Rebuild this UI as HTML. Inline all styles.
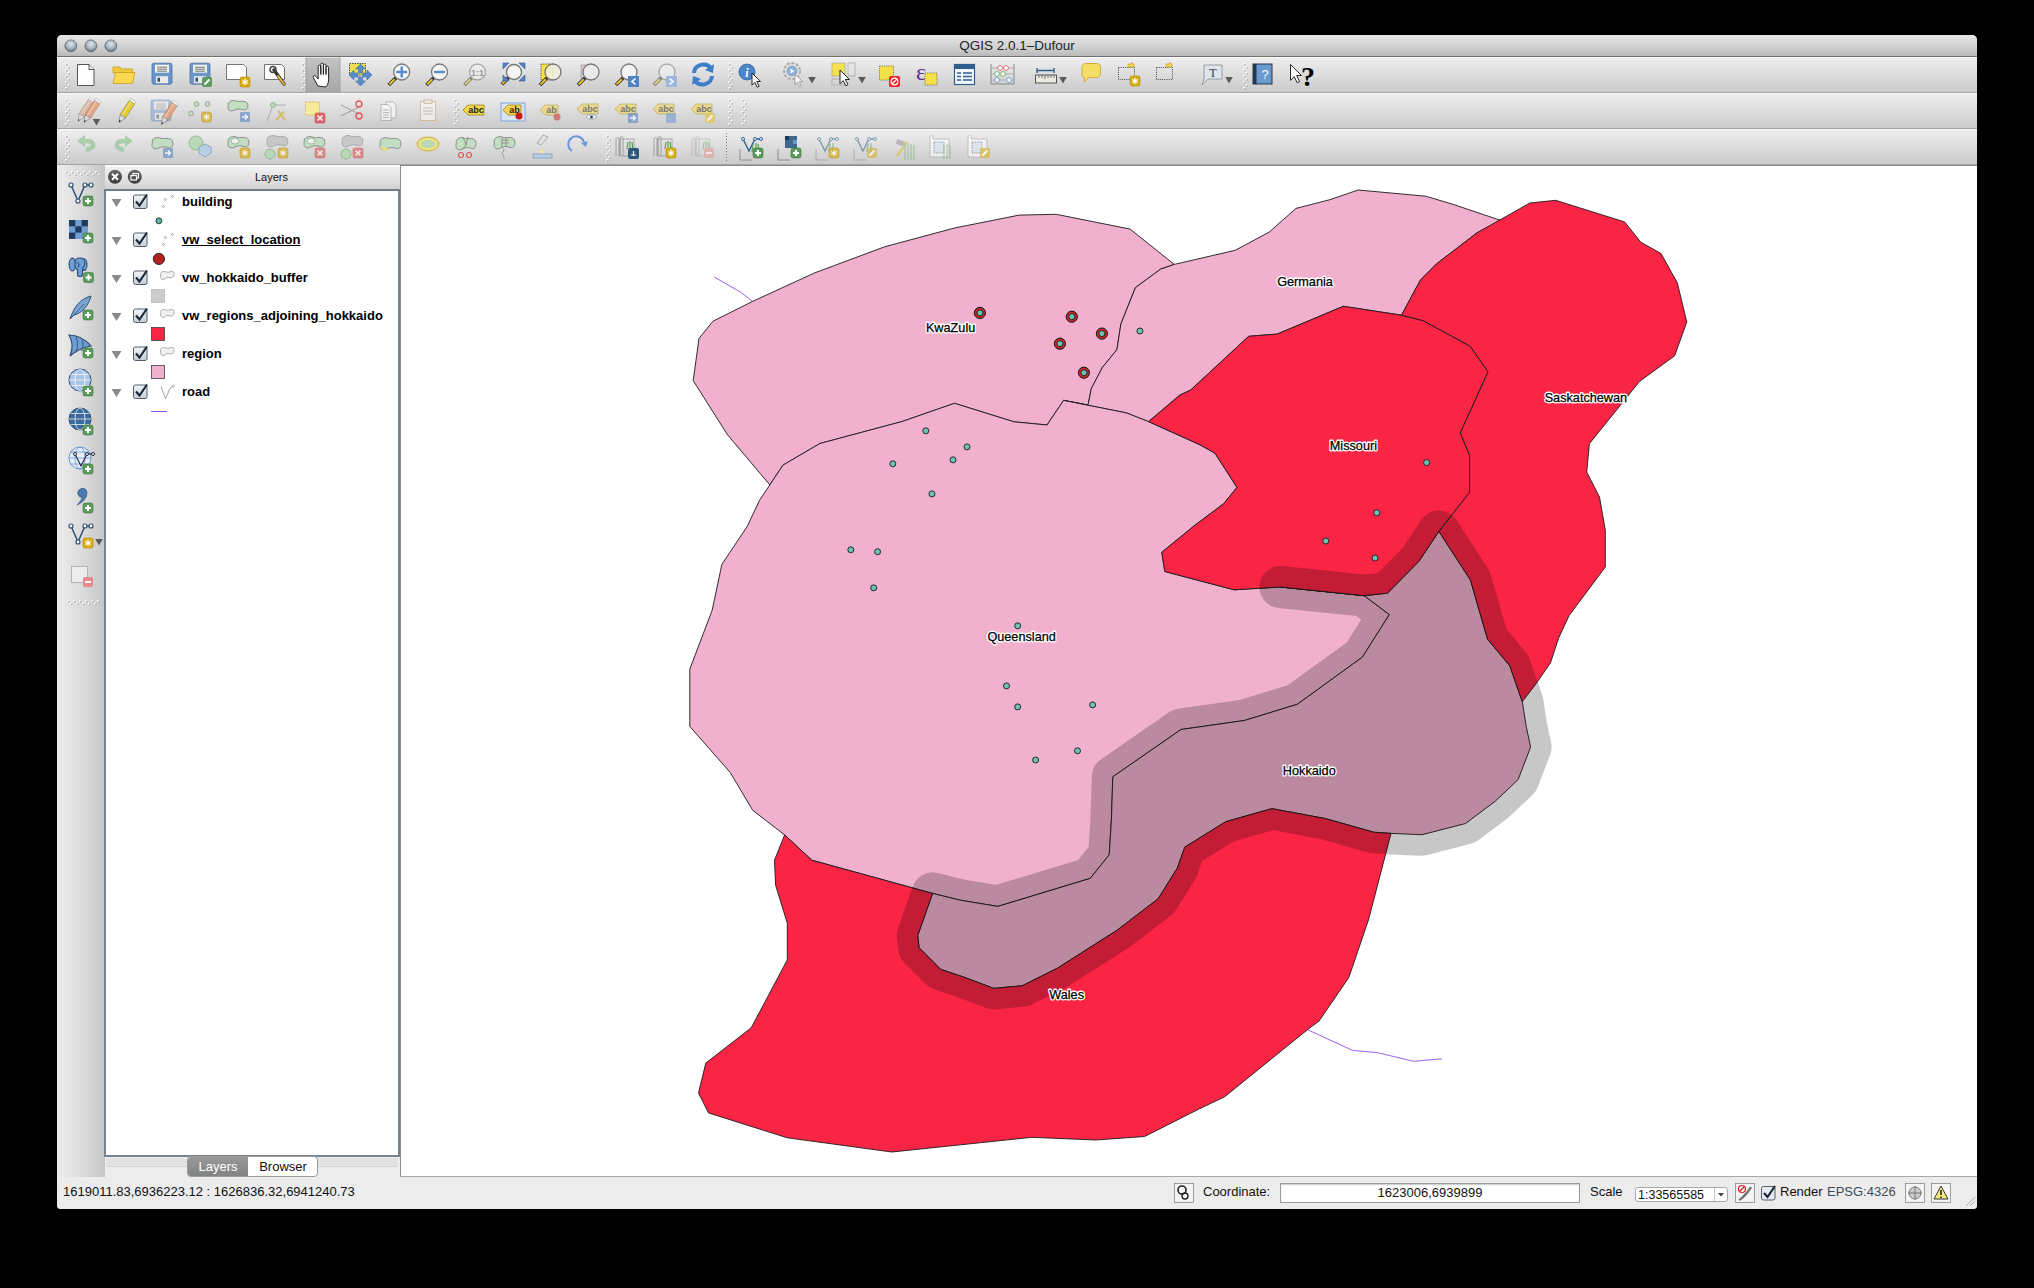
<!DOCTYPE html><html><head><meta charset="utf-8"><title>QGIS</title><style>
*{margin:0;padding:0;box-sizing:border-box}
html,body{width:2034px;height:1288px;background:#000;overflow:hidden;font-family:"Liberation Sans",sans-serif}
.abs{position:absolute}
#win{left:57px;top:35px;width:1920px;height:1174px;background:#ececec;border-radius:5px 5px 4px 4px;overflow:hidden}
#title{left:57px;top:35px;width:1920px;height:22px;background:linear-gradient(#e6e6e6,#d2d2d2 55%,#bababa);border-bottom:1px solid #707070;border-radius:5px 5px 0 0;font-size:13.5px;color:#222;text-align:center;line-height:22px}
.tb{left:57px;width:1920px;height:36px;background:linear-gradient(#eeeeee,#d9d9d9 60%,#cbcbcb);border-top:1px solid #fafafa;border-bottom:1px solid #a4a4a4}
#ltb{left:57px;top:165px;width:48px;height:1012px;background:linear-gradient(90deg,#ededed,#d8d8d8 60%,#c6c6c6)}
#dock{left:105px;top:165px;width:295px;height:1012px;background:#ececec}
#dockhdr{left:105px;top:165px;width:295px;height:25px;background:linear-gradient(#f4f4f4,#dcdcdc 70%,#cdcdcd);border-top:1px solid #fff;font-size:11px;color:#111;padding-left:150px;line-height:22px}
#tree{left:104px;top:189px;width:296px;height:968px;background:#fff;border:2px solid #77838d;border-top:2.5px solid #6f7b86}
#canvas{left:400px;top:165px;width:1577px;height:1012px;background:#fff;border-left:1px solid #8a8a8a;border-top:1px solid #8a8a8a;border-bottom:1px solid #a8a8a8}
#status{left:57px;top:1177px;width:1920px;height:32px;background:#ececec;border-radius:0 0 4px 4px}
.map{position:absolute;left:0;top:0}
.lbl{font-family:"Liberation Sans",sans-serif;font-size:12.7px}
.lyr{position:absolute;font-size:13px;font-weight:bold;color:#000;white-space:nowrap}
.st{position:absolute;font-size:13px;color:#111;white-space:nowrap}
</style></head><body>
<div id="win" class="abs"></div>
<div id="title" class="abs">QGIS 2.0.1–Dufour</div>
<div class="tb abs" style="top:57px"></div>
<div class="tb abs" style="top:93px"></div>
<div class="tb abs" style="top:129px"></div>
<div id="ltb" class="abs"></div>
<div id="dock" class="abs"></div>
<div id="dockhdr" class="abs">Layers</div>
<div id="tree" class="abs"></div>
<div class="abs" style="left:106px;top:1158px;width:292px;height:9px;background:#e3e3e3;border-bottom:1px solid #d4d4d4;border-radius:0 0 4px 4px"></div>
<div id="canvas" class="abs"></div>
<div id="status" class="abs"></div>
<div class="lyr" style="left:182px;top:194px;line-height:15px;">building</div>
<div class="lyr" style="left:182px;top:232px;line-height:15px;text-decoration:underline;">vw_select_location</div>
<div class="lyr" style="left:182px;top:270px;line-height:15px;">vw_hokkaido_buffer</div>
<div class="lyr" style="left:182px;top:308px;line-height:15px;">vw_regions_adjoining_hokkaido</div>
<div class="lyr" style="left:182px;top:346px;line-height:15px;">region</div>
<div class="lyr" style="left:182px;top:384px;line-height:15px;">road</div>
<div class="st" style="left:63px;top:1184px">1619011.83,6936223.12 : 1626836.32,6941240.73</div>
<div class="st" style="left:1203px;top:1184px">Coordinate:</div>
<div class="abs" style="left:1280px;top:1183px;width:300px;height:20px;background:#fff;border:1px solid #9a9a9a;box-shadow:inset 0 1px 1px #ccc;font-size:13px;text-align:center;line-height:18px;color:#111">1623006,6939899</div>
<div class="st" style="left:1590px;top:1184px">Scale</div>
<div class="abs" style="left:1635px;top:1187px;width:93px;height:15px;background:#fff;border:1px solid #a8a8a8;border-radius:3px;font-size:12.5px;line-height:14px;color:#111;padding-left:2px">1:33565585</div>
<div class="st" style="left:1780px;top:1184px">Render</div>
<div class="st" style="left:1827px;top:1184px;color:#3c4a58">EPSG:4326</div>
<div class="abs" style="left:187px;top:1156px;width:131px;height:21px;border:1px solid #9a9a9a;border-radius:4px;background:#fff;overflow:hidden"><div class="abs" style="left:0;top:0;width:60px;height:21px;background:linear-gradient(#9a9a9a,#808080);color:#fff;font-size:13px;line-height:19px;text-align:center">Layers</div><div class="abs" style="left:60px;top:0;width:70px;height:21px;color:#111;font-size:13px;line-height:19px;text-align:center">Browser</div></div>
<svg class="map" width="2034" height="1288" viewBox="0 0 2034 1288">
<defs><clipPath id="mc"><rect x="401" y="166" width="1576" height="1010"/></clipPath></defs>
<g clip-path="url(#mc)">
<polyline points="714.3,277.1 740.7,292.2 752.6,301.4" fill="none" stroke="#a060f0" stroke-width="1"/>
<polyline points="1307.8,1029.8 1352.5,1050.4 1377.4,1052.6 1413.4,1061.3 1442.0,1058.8" fill="none" stroke="#a060f0" stroke-width="1"/>
<polygon points="693.2,380.6 699.0,338.4 713.0,321.2 752.6,301.4 814.6,272.9 884.6,246.8 954.5,228.0 1019.2,215.1 1056.2,214.3 1130.1,229.1 1174.3,264.4 1160.5,269.2 1135.4,287.7 1120.9,323.9 1116.9,349.7 1102.4,367.4 1091.3,388.6 1088.0,405.0 1063.6,400.4 1047.0,425.0 1014.0,421.8 954.5,403.3 901.8,421.6 819.9,443.5 783.0,465.1 769.8,484.9 727.5,434.8" fill="#f0b0ce" stroke="#1a1a1a" stroke-width="0.9" stroke-linejoin="round"/>
<polygon points="1088.0,405.0 1091.3,388.6 1102.4,367.4 1116.9,349.7 1120.9,323.9 1135.4,287.7 1160.5,269.2 1174.3,264.4 1235.2,250.3 1269.0,232.2 1296.0,208.4 1329.8,199.7 1358.2,190.0 1425.8,196.2 1452.9,204.3 1501.0,220.5 1477.2,232.7 1436.6,263.8 1420.4,280.1 1401.5,315.2 1343.3,306.3 1277.1,334.1 1248.7,336.3 1190.6,390.1 1179.7,395.2 1148.6,421.6 1126.1,412.8 1063.6,400.4" fill="#f0b0ce" stroke="#1a1a1a" stroke-width="0.9" stroke-linejoin="round"/>
<polygon points="783.0,465.1 769.8,484.9 759.7,500.0 747.1,526.6 721.9,564.3 712.1,610.4 689.8,669.1 689.8,726.4 730.3,772.6 752.7,810.3 784.6,834.9 811.8,860.2 932.6,893.4 959.8,900.1 997.8,906.4 1090.2,878.4 1109.2,854.8 1111.4,820.0 1112.8,776.8 1181.0,729.5 1244.4,720.5 1297.3,704.3 1362.5,657.0 1389.3,614.6 1364.3,595.7 1280.4,587.0 1234.1,589.8 1164.8,571.5 1161.8,552.3 1194.3,525.7 1223.8,503.6 1237.0,487.4 1214.9,453.1 1200.0,444.8 1148.6,421.6 1126.1,412.8 1063.6,400.4 1047.0,425.0 1014.0,421.8 954.5,403.3 901.8,421.6 819.9,443.5" fill="#f0b0ce" stroke="#1a1a1a" stroke-width="0.9" stroke-linejoin="round"/>
<polygon points="1438.9,531.4 1470.5,580.2 1487.5,639.1 1509.8,665.9 1522.3,701.6 1526.2,726.4 1530.6,747.0 1518.2,779.5 1495.4,801.1 1465.6,823.5 1422.1,834.7 1391.0,833.4 1373.7,832.2 1325.2,818.5 1271.8,808.6 1225.8,821.7 1184.8,847.1 1177.3,868.2 1158.1,898.8 1117.4,930.0 1057.6,968.1 1022.3,985.7 993.8,988.4 965.2,977.6 940.8,969.4 919.1,947.7 917.7,935.5 932.6,893.4 959.8,900.1 997.8,906.4 1090.2,878.4 1109.2,854.8 1111.4,820.0 1112.8,776.8 1181.0,729.5 1244.4,720.5 1297.3,704.3 1362.5,657.0 1389.3,614.6 1364.3,595.7 1280.4,587.0 1364.3,595.7 1387.5,593.2 1418.8,561.4" fill="#f0b0ce" stroke="#1a1a1a" stroke-width="0.9" stroke-linejoin="round"/>
<polygon points="1148.6,421.6 1179.7,395.2 1190.6,390.1 1248.7,336.3 1277.1,334.1 1343.3,306.3 1401.5,315.2 1423.1,320.6 1470.4,346.3 1488.0,372.0 1460.4,432.8 1469.6,455.3 1469.6,492.3 1438.9,531.4 1418.8,561.4 1387.5,593.2 1364.3,595.7 1280.4,587.0 1234.1,589.8 1164.8,571.5 1161.8,552.3 1194.3,525.7 1223.8,503.6 1237.0,487.4 1214.9,453.1 1200.0,444.8" fill="#fa2545" stroke="#1a1a1a" stroke-width="0.9" stroke-linejoin="round"/>
<polygon points="1401.5,315.2 1420.4,280.1 1436.6,263.8 1477.2,232.7 1529.9,203.0 1555.6,200.3 1624.6,221.9 1640.8,242.2 1661.1,253.6 1677.3,282.8 1686.8,322.0 1674.6,355.8 1639.5,381.5 1589.4,443.7 1586.7,472.0 1599.5,497.0 1605.3,530.2 1605.3,567.0 1569.0,615.7 1558.7,637.9 1550.4,663.0 1536.6,683.0 1522.3,701.6 1509.8,665.9 1487.5,639.1 1470.5,580.2 1438.9,531.4 1469.6,492.3 1469.6,455.3 1460.4,432.8 1488.0,372.0 1470.4,346.3 1423.1,320.6" fill="#fa2545" stroke="#1a1a1a" stroke-width="0.9" stroke-linejoin="round"/>
<polygon points="784.6,834.9 811.8,860.2 932.6,893.4 917.7,935.5 919.1,947.7 940.8,969.4 965.2,977.6 993.8,988.4 1022.3,985.7 1057.6,968.1 1117.4,930.0 1158.1,898.8 1177.3,868.2 1184.8,847.1 1225.8,821.7 1271.8,808.6 1325.2,818.5 1373.7,832.2 1391.0,833.4 1368.7,919.2 1348.8,977.6 1319.0,1021.1 1309.0,1028.5 1224.6,1096.8 1200.0,1108.5 1144.6,1136.5 1095.6,1140.0 1031.8,1137.3 891.9,1152.0 787.3,1137.8 708.5,1112.9 698.5,1093.0 705.8,1063.1 751.2,1027.8 787.3,959.9 787.3,923.2 775.6,885.2 774.5,860.2" fill="#fa2545" stroke="#1a1a1a" stroke-width="0.9" stroke-linejoin="round"/>
<g opacity="0.215"><polygon points="1438.9,531.4 1470.5,580.2 1487.5,639.1 1509.8,665.9 1522.3,701.6 1526.2,726.4 1530.6,747.0 1518.2,779.5 1495.4,801.1 1465.6,823.5 1422.1,834.7 1391.0,833.4 1373.7,832.2 1325.2,818.5 1271.8,808.6 1225.8,821.7 1184.8,847.1 1177.3,868.2 1158.1,898.8 1117.4,930.0 1057.6,968.1 1022.3,985.7 993.8,988.4 965.2,977.6 940.8,969.4 919.1,947.7 917.7,935.5 932.6,893.4 959.8,900.1 997.8,906.4 1090.2,878.4 1109.2,854.8 1111.4,820.0 1112.8,776.8 1181.0,729.5 1244.4,720.5 1297.3,704.3 1362.5,657.0 1389.3,614.6 1364.3,595.7 1280.4,587.0 1364.3,595.7 1387.5,593.2 1418.8,561.4" fill="#000" stroke="#000" stroke-width="42" stroke-linejoin="round"/></g>
<circle cx="979.9" cy="312.9" r="5.6" fill="#c8282a" stroke="#111" stroke-width="1"/>
<circle cx="1071.8" cy="316.7" r="5.6" fill="#c8282a" stroke="#111" stroke-width="1"/>
<circle cx="1101.9" cy="333.6" r="5.6" fill="#c8282a" stroke="#111" stroke-width="1"/>
<circle cx="1059.9" cy="343.7" r="5.6" fill="#c8282a" stroke="#111" stroke-width="1"/>
<circle cx="1083.9" cy="372.7" r="5.6" fill="#c8282a" stroke="#111" stroke-width="1"/>
<circle cx="1139.9" cy="331" r="3" fill="#6cc2b6" stroke="#1a1a1a" stroke-width="0.9"/>
<circle cx="925.8" cy="430.8" r="3" fill="#6cc2b6" stroke="#1a1a1a" stroke-width="0.9"/>
<circle cx="967" cy="446.9" r="3" fill="#6cc2b6" stroke="#1a1a1a" stroke-width="0.9"/>
<circle cx="892.8" cy="463.8" r="3" fill="#6cc2b6" stroke="#1a1a1a" stroke-width="0.9"/>
<circle cx="953" cy="459.8" r="3" fill="#6cc2b6" stroke="#1a1a1a" stroke-width="0.9"/>
<circle cx="931.9" cy="493.9" r="3" fill="#6cc2b6" stroke="#1a1a1a" stroke-width="0.9"/>
<circle cx="850.8" cy="549.8" r="3" fill="#6cc2b6" stroke="#1a1a1a" stroke-width="0.9"/>
<circle cx="877.6" cy="551.7" r="3" fill="#6cc2b6" stroke="#1a1a1a" stroke-width="0.9"/>
<circle cx="873.7" cy="587.8" r="3" fill="#6cc2b6" stroke="#1a1a1a" stroke-width="0.9"/>
<circle cx="1017.7" cy="625.8" r="3" fill="#6cc2b6" stroke="#1a1a1a" stroke-width="0.9"/>
<circle cx="1006.5" cy="685.9" r="3" fill="#6cc2b6" stroke="#1a1a1a" stroke-width="0.9"/>
<circle cx="1017.7" cy="706.9" r="3" fill="#6cc2b6" stroke="#1a1a1a" stroke-width="0.9"/>
<circle cx="1092.6" cy="704.9" r="3" fill="#6cc2b6" stroke="#1a1a1a" stroke-width="0.9"/>
<circle cx="1077.5" cy="750.8" r="3" fill="#6cc2b6" stroke="#1a1a1a" stroke-width="0.9"/>
<circle cx="1035.6" cy="760" r="3" fill="#6cc2b6" stroke="#1a1a1a" stroke-width="0.9"/>
<circle cx="1426.6" cy="462.6" r="3" fill="#6cc2b6" stroke="#1a1a1a" stroke-width="0.9"/>
<circle cx="1376.8" cy="512.8" r="3" fill="#6cc2b6" stroke="#1a1a1a" stroke-width="0.9"/>
<circle cx="1325.8" cy="541" r="3" fill="#6cc2b6" stroke="#1a1a1a" stroke-width="0.9"/>
<circle cx="1375" cy="558" r="3" fill="#6cc2b6" stroke="#1a1a1a" stroke-width="0.9"/>
<circle cx="979.9" cy="312.9" r="3" fill="#6cc2b6" stroke="#1a1a1a" stroke-width="0.9"/>
<circle cx="1071.8" cy="316.7" r="3" fill="#6cc2b6" stroke="#1a1a1a" stroke-width="0.9"/>
<circle cx="1101.9" cy="333.6" r="3" fill="#6cc2b6" stroke="#1a1a1a" stroke-width="0.9"/>
<circle cx="1059.9" cy="343.7" r="3" fill="#6cc2b6" stroke="#1a1a1a" stroke-width="0.9"/>
<circle cx="1083.9" cy="372.7" r="3" fill="#6cc2b6" stroke="#1a1a1a" stroke-width="0.9"/>
<text x="950.6" y="331.7" text-anchor="middle" class="lbl" stroke="#fff" stroke-width="2.8" stroke-linejoin="round" fill="#fff">KwaZulu</text>
<text x="950.6" y="331.7" text-anchor="middle" class="lbl" fill="#000" stroke="#000" stroke-width="0.25">KwaZulu</text>
<text x="1305" y="286.2" text-anchor="middle" class="lbl" stroke="#fff" stroke-width="2.8" stroke-linejoin="round" fill="#fff">Germania</text>
<text x="1305" y="286.2" text-anchor="middle" class="lbl" fill="#000" stroke="#000" stroke-width="0.25">Germania</text>
<text x="1353.4" y="450.4" text-anchor="middle" class="lbl" stroke="#fff" stroke-width="2.8" stroke-linejoin="round" fill="#fff">Missouri</text>
<text x="1353.4" y="450.4" text-anchor="middle" class="lbl" fill="#000" stroke="#000" stroke-width="0.25">Missouri</text>
<text x="1585.9" y="401.7" text-anchor="middle" class="lbl" stroke="#fff" stroke-width="2.8" stroke-linejoin="round" fill="#fff">Saskatchewan</text>
<text x="1585.9" y="401.7" text-anchor="middle" class="lbl" fill="#000" stroke="#000" stroke-width="0.25">Saskatchewan</text>
<text x="1021.6" y="641" text-anchor="middle" class="lbl" stroke="#fff" stroke-width="2.8" stroke-linejoin="round" fill="#fff">Queensland</text>
<text x="1021.6" y="641" text-anchor="middle" class="lbl" fill="#000" stroke="#000" stroke-width="0.25">Queensland</text>
<text x="1309.3" y="774.6" text-anchor="middle" class="lbl" stroke="#fff" stroke-width="2.8" stroke-linejoin="round" fill="#fff">Hokkaido</text>
<text x="1309.3" y="774.6" text-anchor="middle" class="lbl" fill="#000" stroke="#000" stroke-width="0.25">Hokkaido</text>
<text x="1066.6" y="998.7" text-anchor="middle" class="lbl" stroke="#fff" stroke-width="2.8" stroke-linejoin="round" fill="#fff">Wales</text>
<text x="1066.6" y="998.7" text-anchor="middle" class="lbl" fill="#000" stroke="#000" stroke-width="0.25">Wales</text>
</g></svg>
<svg class="map" width="2034" height="1288" viewBox="0 0 2034 1288">
<defs><radialGradient id="tl" cx="50%" cy="35%" r="60%"><stop offset="0" stop-color="#dfe7ee"/><stop offset="0.6" stop-color="#a9b8c4"/><stop offset="1" stop-color="#6f808e"/></radialGradient><linearGradient id="pressed" x1="0" y1="0" x2="0" y2="1"><stop offset="0" stop-color="#c4c4c4"/><stop offset="1" stop-color="#a6a6a6"/></linearGradient><linearGradient id="cbx" x1="0" y1="0" x2="0" y2="1"><stop offset="0" stop-color="#f4f6f8"/><stop offset="1" stop-color="#c4ccd4"/></linearGradient><linearGradient id="dkbtn" x1="0" y1="0" x2="0" y2="1"><stop offset="0" stop-color="#6a6a6a"/><stop offset="1" stop-color="#3a3a3a"/></linearGradient></defs>
<circle cx="70.8" cy="45.8" r="5.9" fill="url(#tl)" stroke="#4e5a64" stroke-width="0.7"/>
<circle cx="90.9" cy="45.8" r="5.9" fill="url(#tl)" stroke="#4e5a64" stroke-width="0.7"/>
<circle cx="110.8" cy="45.8" r="5.9" fill="url(#tl)" stroke="#4e5a64" stroke-width="0.7"/>
<rect x="65.0" y="63.0" width="2" height="2" fill="#fafafa"/><rect x="66.0" y="64.0" width="1.5" height="1.5" fill="#b0b0b0"/><rect x="67.5" y="66.0" width="2" height="2" fill="#fafafa"/><rect x="68.5" y="67.0" width="1.5" height="1.5" fill="#b0b0b0"/><rect x="65.0" y="69.0" width="2" height="2" fill="#fafafa"/><rect x="66.0" y="70.0" width="1.5" height="1.5" fill="#b0b0b0"/><rect x="67.5" y="72.0" width="2" height="2" fill="#fafafa"/><rect x="68.5" y="73.0" width="1.5" height="1.5" fill="#b0b0b0"/><rect x="65.0" y="75.0" width="2" height="2" fill="#fafafa"/><rect x="66.0" y="76.0" width="1.5" height="1.5" fill="#b0b0b0"/><rect x="67.5" y="78.0" width="2" height="2" fill="#fafafa"/><rect x="68.5" y="79.0" width="1.5" height="1.5" fill="#b0b0b0"/><rect x="65.0" y="81.0" width="2" height="2" fill="#fafafa"/><rect x="66.0" y="82.0" width="1.5" height="1.5" fill="#b0b0b0"/><rect x="67.5" y="84.0" width="2" height="2" fill="#fafafa"/><rect x="68.5" y="85.0" width="1.5" height="1.5" fill="#b0b0b0"/><rect x="65.0" y="87.0" width="2" height="2" fill="#fafafa"/><rect x="66.0" y="88.0" width="1.5" height="1.5" fill="#b0b0b0"/>
<path d="M77.5 64.5h11.5l5 5v16h-16.5z" fill="#fff" stroke="#555" stroke-width="1"/><path d="M89 64.5v5h5" fill="#eee" stroke="#555" stroke-width="1"/>
<path d="M113 67h7l1.5 2h11v4h-19.5z" fill="#f0cc3a" stroke="#c8a020" stroke-width="0.8"/><path d="M113 83.5l2.5 -11h19.5l-2.5 11z" fill="#fad94e" stroke="#c8a020" stroke-width="0.8"/>
<g opacity="1"><rect x="152" y="63.2" width="20" height="21" rx="2" fill="#6b96c8" stroke="#4a72a4" stroke-width="0.8"/><rect x="155" y="64.7" width="14" height="8" fill="#f2f2f2"/><path d="M157 67.2h10M157 69.2h10M157 71.2h10" stroke="#555" stroke-width="0.8"/><rect x="156" y="76.2" width="12" height="7" fill="#eaeaea"/><rect x="157.5" y="77.7" width="2.5" height="4" fill="#2f4f78"/></g>
<g opacity="1"><rect x="190" y="63.2" width="20" height="21" rx="2" fill="#6b96c8" stroke="#4a72a4" stroke-width="0.8"/><rect x="193" y="64.7" width="14" height="8" fill="#f2f2f2"/><path d="M195 67.2h10M195 69.2h10M195 71.2h10" stroke="#555" stroke-width="0.8"/><rect x="194" y="76.2" width="12" height="7" fill="#eaeaea"/><rect x="195.5" y="77.7" width="2.5" height="4" fill="#2f4f78"/></g>
<g opacity="1"><rect x="202" y="77" width="10" height="10" rx="2" fill="#5b9b5b"/><path d="M204.5 84.5l5 -5" stroke="#fff" stroke-width="1.8"/></g>
<path d="M226.5 64.5h17l3 3v12h-20z" fill="#fff" stroke="#666" stroke-width="0.9"/><g opacity="1"><rect x="240" y="77" width="10" height="10" rx="2" fill="#d9ad14" stroke="#b08a00" stroke-width="0.6"/><path d="M245 78.8v6.4M242.2 80.4l5.6 3.2M242.2 83.6l5.6 -3.2" stroke="#fff" stroke-width="1.2"/></g>
<path d="M264.5 64.5h17l3 3v12h-20z" fill="#fff" stroke="#666" stroke-width="0.9"/><path d="M274 70l10 14" stroke="#333" stroke-width="3.4" stroke-linecap="round"/><path d="M278 76l6 8" stroke="#e8c030" stroke-width="2" stroke-linecap="round"/><circle cx="273" cy="69.5" r="3" fill="none" stroke="#444" stroke-width="1.5"/>
<rect x="301.4" y="63.0" width="2" height="2" fill="#fafafa"/><rect x="302.4" y="64.0" width="1.5" height="1.5" fill="#b0b0b0"/><rect x="303.9" y="66.0" width="2" height="2" fill="#fafafa"/><rect x="304.9" y="67.0" width="1.5" height="1.5" fill="#b0b0b0"/><rect x="301.4" y="69.0" width="2" height="2" fill="#fafafa"/><rect x="302.4" y="70.0" width="1.5" height="1.5" fill="#b0b0b0"/><rect x="303.9" y="72.0" width="2" height="2" fill="#fafafa"/><rect x="304.9" y="73.0" width="1.5" height="1.5" fill="#b0b0b0"/><rect x="301.4" y="75.0" width="2" height="2" fill="#fafafa"/><rect x="302.4" y="76.0" width="1.5" height="1.5" fill="#b0b0b0"/><rect x="303.9" y="78.0" width="2" height="2" fill="#fafafa"/><rect x="304.9" y="79.0" width="1.5" height="1.5" fill="#b0b0b0"/><rect x="301.4" y="81.0" width="2" height="2" fill="#fafafa"/><rect x="302.4" y="82.0" width="1.5" height="1.5" fill="#b0b0b0"/><rect x="303.9" y="84.0" width="2" height="2" fill="#fafafa"/><rect x="304.9" y="85.0" width="1.5" height="1.5" fill="#b0b0b0"/><rect x="301.4" y="87.0" width="2" height="2" fill="#fafafa"/><rect x="302.4" y="88.0" width="1.5" height="1.5" fill="#b0b0b0"/>
<rect x="306" y="57.5" width="34" height="34.5" fill="url(#pressed)"/><path d="M306 57.5v34.5M340 57.5v34.5" stroke="#9a9a9a" stroke-width="0.8"/>
<path d="M318 86l-4.5 -8c-1 -2 1 -3.2 2.4 -1.5l2.3 2.5v-12.5c0 -1.8 2.6 -1.8 2.6 0v8v-10c0 -1.8 2.6 -1.8 2.6 0v10v-9c0 -1.8 2.6 -1.8 2.6 0v9v-7c0 -1.8 2.6 -1.8 2.6 0v12c0 4 -1.5 6 -3 7.5z" fill="#fff" stroke="#222" stroke-width="1"/>
<rect x="349.5" y="63.5" width="16" height="11.5" fill="#f5e04a" stroke="#222" stroke-width="0.8" stroke-dasharray="1.5 1"/>
<g fill="#5a8ccc" stroke="#3d6fae" stroke-width="0.6"><path d="M360.5 64l-5 5h3v4h4v-4h3z"/><path d="M360.5 86l-5 -5h3v-4h4v4h3z"/><path d="M349 75l5 -5v3h4v4h-4v3z"/><path d="M372 75l-5 -5v3h-4v4h4v3z"/></g>
<g opacity="1"><path d="M395.9 77.8L388.7 85.0" stroke="#333" stroke-width="3.6" stroke-linecap="butt"/><path d="M394.5 79.2L389.3 84.4" stroke="#f0c828" stroke-width="2" stroke-linecap="butt"/><circle cx="401.7" cy="72" r="8" fill="#f4f4f4" stroke="#777" stroke-width="1.3"/></g><path d="M401.7 66.5v11M396.2 72h11" stroke="#5a8ccc" stroke-width="2.4"/>
<g opacity="1"><path d="M433.7 77.8L426.5 85.0" stroke="#333" stroke-width="3.6" stroke-linecap="butt"/><path d="M432.3 79.2L427.1 84.4" stroke="#f0c828" stroke-width="2" stroke-linecap="butt"/><circle cx="439.5" cy="72" r="8" fill="#f4f4f4" stroke="#777" stroke-width="1.3"/></g><path d="M434 72h11" stroke="#5a8ccc" stroke-width="2.4"/>
<g opacity="0.55"><path d="M471.7 77.8L464.5 85.0" stroke="#333" stroke-width="3.6" stroke-linecap="butt"/><path d="M470.3 79.2L465.1 84.4" stroke="#f0c828" stroke-width="2" stroke-linecap="butt"/><circle cx="477.5" cy="72" r="8" fill="#f4f4f4" stroke="#777" stroke-width="1.3"/></g><text x="477.5" y="75.5" text-anchor="middle" font-family="Liberation Sans" font-size="9" font-weight="bold" fill="#9a9a9a">1:1</text>
<rect x="504" y="63" width="20" height="18" fill="none"/><g opacity="1"><path d="M508.6 77.4L501.9 84.2" stroke="#333" stroke-width="3.6" stroke-linecap="butt"/><path d="M507.2 78.8L502.4 83.6" stroke="#f0c828" stroke-width="2" stroke-linecap="butt"/><circle cx="514" cy="72" r="7.5" fill="#f4f4f4" stroke="#777" stroke-width="1.3"/></g><path d="M503 63h6l-6 6zM525 63h-6l6 6zM525 81h-6l6 -6zM503 81v-6l6 6z" fill="#4f83c2" stroke="#2e5f9e" stroke-width="0.6"/>
<rect x="541" y="64" width="12" height="16" fill="#f5e04a" stroke="#222" stroke-width="0.7" stroke-dasharray="1.2 1"/><g opacity="1"><path d="M547.2 77.8L540.0 85.0" stroke="#333" stroke-width="3.6" stroke-linecap="butt"/><path d="M545.8 79.2L540.6 84.4" stroke="#f0c828" stroke-width="2" stroke-linecap="butt"/><circle cx="553" cy="72" r="8" fill="rgba(240,240,225,0.85)" stroke="#777" stroke-width="1.3"/></g>
<rect x="581" y="65" width="14" height="14" fill="#d8c8d4" stroke="#999" stroke-width="0.7"/><g opacity="1"><path d="M585.2 77.8L578.0 85.0" stroke="#333" stroke-width="3.6" stroke-linecap="butt"/><path d="M583.8 79.2L578.6 84.4" stroke="#f0c828" stroke-width="2" stroke-linecap="butt"/><circle cx="591" cy="72" r="8" fill="rgba(238,238,238,0.9)" stroke="#777" stroke-width="1.3"/></g>
<g opacity="1"><path d="M623.2 77.8L616.0 85.0" stroke="#333" stroke-width="3.6" stroke-linecap="butt"/><path d="M621.8 79.2L616.6 84.4" stroke="#f0c828" stroke-width="2" stroke-linecap="butt"/><circle cx="629" cy="72" r="8" fill="#f4f4f4" stroke="#777" stroke-width="1.3"/></g><rect x="628" y="76" width="11" height="11" fill="#4f83c2"/><path d="M635.5 78.5l-3.5 3l3.5 3" stroke="#fff" stroke-width="1.6" fill="none"/>
<g opacity="0.55"><path d="M661.2 77.8L654.0 85.0" stroke="#333" stroke-width="3.6" stroke-linecap="butt"/><path d="M659.8 79.2L654.6 84.4" stroke="#f0c828" stroke-width="2" stroke-linecap="butt"/><circle cx="667" cy="72" r="8" fill="#f4f4f4" stroke="#777" stroke-width="1.3"/></g><rect x="666" y="76" width="11" height="11" fill="#9db8dc"/><path d="M669.5 78.5l3.5 3l-3.5 3" stroke="#fff" stroke-width="1.6" fill="none"/>
<path d="M694 73a9.5 9 0 0 1 17 -5" stroke="#3d7fc8" stroke-width="4" fill="none"/><path d="M714 64l-1 9l-8 -3z" fill="#3d7fc8"/><path d="M712 76a9.5 9 0 0 1 -17 5" stroke="#3d7fc8" stroke-width="4" fill="none"/><path d="M692 85l1 -9l8 3z" fill="#3d7fc8"/>
<rect x="728.0" y="63.0" width="2" height="2" fill="#fafafa"/><rect x="729.0" y="64.0" width="1.5" height="1.5" fill="#b0b0b0"/><rect x="730.5" y="66.0" width="2" height="2" fill="#fafafa"/><rect x="731.5" y="67.0" width="1.5" height="1.5" fill="#b0b0b0"/><rect x="728.0" y="69.0" width="2" height="2" fill="#fafafa"/><rect x="729.0" y="70.0" width="1.5" height="1.5" fill="#b0b0b0"/><rect x="730.5" y="72.0" width="2" height="2" fill="#fafafa"/><rect x="731.5" y="73.0" width="1.5" height="1.5" fill="#b0b0b0"/><rect x="728.0" y="75.0" width="2" height="2" fill="#fafafa"/><rect x="729.0" y="76.0" width="1.5" height="1.5" fill="#b0b0b0"/><rect x="730.5" y="78.0" width="2" height="2" fill="#fafafa"/><rect x="731.5" y="79.0" width="1.5" height="1.5" fill="#b0b0b0"/><rect x="728.0" y="81.0" width="2" height="2" fill="#fafafa"/><rect x="729.0" y="82.0" width="1.5" height="1.5" fill="#b0b0b0"/><rect x="730.5" y="84.0" width="2" height="2" fill="#fafafa"/><rect x="731.5" y="85.0" width="1.5" height="1.5" fill="#b0b0b0"/><rect x="728.0" y="87.0" width="2" height="2" fill="#fafafa"/><rect x="729.0" y="88.0" width="1.5" height="1.5" fill="#b0b0b0"/>
<circle cx="747" cy="72" r="8" fill="#4a86c8" stroke="#2d63a0" stroke-width="0.8"/><text x="747" y="77" text-anchor="middle" font-family="Liberation Serif" font-style="italic" font-weight="bold" font-size="12" fill="#fff">i</text>
<path d="M752 73l8.5 8.5h-3.8l2.4 4.8l-1.9 0.9l-2.4 -4.8l-2.8 2.8z" fill="#fff" stroke="#111" stroke-width="0.9"/>
<circle cx="792" cy="71" r="8" fill="#e2e2e2" stroke="#aaa" stroke-width="2" stroke-dasharray="3 1.6"/><circle cx="792" cy="71" r="5" fill="#8eb1d8" stroke="#6a8fb8" stroke-width="0.6"/><path d="M790.5 68.5v5l4 -2.5z" fill="#fff"/><path d="M795 74l7.6 7.6h-3.4l2.1 4.2l-1.7 0.8l-2.1 -4.2l-2.5 2.5z" fill="#f6f6f6" stroke="#999" stroke-width="0.9"/><path d="M808.2 77h7.6l-3.8 6.5z" fill="#5a5a5a"/>
<rect x="832" y="63" width="13" height="13" fill="#f5e04a" stroke="#999" stroke-width="0.6"/><rect x="848" y="63" width="7" height="13" fill="none" stroke="#aaa" stroke-width="0.8"/><rect x="832" y="79" width="13" height="6" fill="none" stroke="#aaa" stroke-width="0.8"/><path d="M840 70l9.5 9.5h-4.2l2.6 5.2l-2.1 1.1l-2.6 -5.2l-3.2 3.2z" fill="#fff" stroke="#111" stroke-width="0.9"/><path d="M858.2 77h7.6l-3.8 6.5z" fill="#5a5a5a"/>
<rect x="879.5" y="66" width="14" height="14" fill="#f5e04a" stroke="#555" stroke-width="0.7" stroke-dasharray="1.2 1"/><rect x="889" y="76" width="11" height="11" rx="2" fill="#e22"/><circle cx="894.5" cy="81.5" r="3.4" fill="none" stroke="#fff" stroke-width="1.2"/><path d="M892 84l5 -5" stroke="#fff" stroke-width="1.2"/>
<text x="916" y="80" font-family="Liberation Serif" font-size="24" fill="#6a2f8a">ε</text><rect x="925" y="73" width="12" height="12" fill="#f5e04a" stroke="#555" stroke-width="0.7" stroke-dasharray="1.2 1"/>
<rect x="954.5" y="64.5" width="20" height="20" fill="#f4f8fc" stroke="#2e5f8e" stroke-width="1.2"/><rect x="955" y="65" width="19" height="4" fill="#2e5f8e"/><path d="M957 73h4M963 73h9M957 76.5h4M963 76.5h9M957 80h4M963 80h9" stroke="#2e5f8e" stroke-width="1.4"/>
<path d="M991 64v20h23v-20" fill="none" stroke="#888" stroke-width="1"/><path d="M991 68h23M991 74h23M991 80h23" stroke="#999" stroke-width="0.7"/><g fill="#fff" stroke-width="1"><circle cx="1000" cy="68" r="2.4" stroke="#e07070"/><circle cx="1006" cy="68" r="2.4" stroke="#e07070"/><circle cx="997" cy="74" r="2.4" stroke="#70b870"/><circle cx="1003" cy="74" r="2.4" stroke="#70b870"/><circle cx="997" cy="80" r="2.4" stroke="#6a98c8"/><circle cx="1009" cy="80" r="2.4" stroke="#6a98c8"/></g>
<path d="M1037 70.5h17M1037 68v5M1054 68v5" stroke="#2e5f8e" stroke-width="1.4"/><rect x="1035.5" y="75" width="21" height="8" fill="#eceadf" stroke="#555" stroke-width="1"/><path d="M1039 75v3M1042 75v3M1045 75v4M1048 75v3M1051 75v3M1054 75v3" stroke="#555" stroke-width="0.8"/><path d="M1059.2 77h7.6l-3.8 6.5z" fill="#5a5a5a"/>
<path d="M1082 67c0 -2 2 -3.5 4 -3.5h11c2 0 3.5 1.5 3.5 3.5v7c0 2 -1.5 3.5 -3.5 3.5h-8l-4.5 4.5v-4.5h-1c-1 0 -1.5 -1 -1.5 -3z" fill="#f5de68" stroke="#c8aa30" stroke-width="0.9"/>
<rect x="1118.5" y="67.5" width="16" height="12" fill="none" stroke="#333" stroke-width="0.9" stroke-dasharray="1 1.2"/><path d="M1128 67v-3h3l1 -1.5l1 1.5h1v3z" fill="#f5d84a" stroke="#b89820" stroke-width="0.6"/><g opacity="1"><rect x="1130" y="76" width="10" height="10" rx="2" fill="#d9ad14" stroke="#b08a00" stroke-width="0.6"/><path d="M1135 77.8v6.4M1132.2 79.4l5.6 3.2M1132.2 82.6l5.6 -3.2" stroke="#fff" stroke-width="1.2"/></g>
<rect x="1156.5" y="67.5" width="16" height="12" fill="none" stroke="#333" stroke-width="0.9" stroke-dasharray="1 1.2"/><path d="M1166 67v-3h3l1 -1.5l1 1.5h1v3z" fill="#f5d84a" stroke="#b89820" stroke-width="0.6"/>
<path d="M1204 65h18v14h-14l-6 6l2 -6h0z" fill="#dde6ee" stroke="#888" stroke-width="0.8"/><text x="1213" y="77" text-anchor="middle" font-family="Liberation Serif" font-size="12" fill="#333">T</text><path d="M1225.2 77h7.6l-3.8 6.5z" fill="#5a5a5a"/>
<rect x="1243.0" y="63.0" width="2" height="2" fill="#fafafa"/><rect x="1244.0" y="64.0" width="1.5" height="1.5" fill="#b0b0b0"/><rect x="1245.5" y="66.0" width="2" height="2" fill="#fafafa"/><rect x="1246.5" y="67.0" width="1.5" height="1.5" fill="#b0b0b0"/><rect x="1243.0" y="69.0" width="2" height="2" fill="#fafafa"/><rect x="1244.0" y="70.0" width="1.5" height="1.5" fill="#b0b0b0"/><rect x="1245.5" y="72.0" width="2" height="2" fill="#fafafa"/><rect x="1246.5" y="73.0" width="1.5" height="1.5" fill="#b0b0b0"/><rect x="1243.0" y="75.0" width="2" height="2" fill="#fafafa"/><rect x="1244.0" y="76.0" width="1.5" height="1.5" fill="#b0b0b0"/><rect x="1245.5" y="78.0" width="2" height="2" fill="#fafafa"/><rect x="1246.5" y="79.0" width="1.5" height="1.5" fill="#b0b0b0"/><rect x="1243.0" y="81.0" width="2" height="2" fill="#fafafa"/><rect x="1244.0" y="82.0" width="1.5" height="1.5" fill="#b0b0b0"/><rect x="1245.5" y="84.0" width="2" height="2" fill="#fafafa"/><rect x="1246.5" y="85.0" width="1.5" height="1.5" fill="#b0b0b0"/><rect x="1243.0" y="87.0" width="2" height="2" fill="#fafafa"/><rect x="1244.0" y="88.0" width="1.5" height="1.5" fill="#b0b0b0"/>
<rect x="1253" y="64" width="19" height="20" fill="#6a9ad0" stroke="#22384f" stroke-width="1"/><rect x="1253" y="64" width="3.5" height="20" fill="#22384f"/><text x="1265" y="79" text-anchor="middle" font-family="Liberation Sans" font-size="13" fill="#fff">?</text>
<path d="M1290.5 64.5l11.0 11.0h-4.9l3.0 6.1l-2.4 1.2l-3.0 -6.1l-3.7 3.7z" fill="#fff" stroke="#111" stroke-width="0.9"/><text x="1301" y="85.5" font-family="Liberation Serif" font-weight="bold" font-size="28" fill="#000">?</text>
<rect x="65.0" y="99.0" width="2" height="2" fill="#fafafa"/><rect x="66.0" y="100.0" width="1.5" height="1.5" fill="#b0b0b0"/><rect x="67.5" y="102.0" width="2" height="2" fill="#fafafa"/><rect x="68.5" y="103.0" width="1.5" height="1.5" fill="#b0b0b0"/><rect x="65.0" y="105.0" width="2" height="2" fill="#fafafa"/><rect x="66.0" y="106.0" width="1.5" height="1.5" fill="#b0b0b0"/><rect x="67.5" y="108.0" width="2" height="2" fill="#fafafa"/><rect x="68.5" y="109.0" width="1.5" height="1.5" fill="#b0b0b0"/><rect x="65.0" y="111.0" width="2" height="2" fill="#fafafa"/><rect x="66.0" y="112.0" width="1.5" height="1.5" fill="#b0b0b0"/><rect x="67.5" y="114.0" width="2" height="2" fill="#fafafa"/><rect x="68.5" y="115.0" width="1.5" height="1.5" fill="#b0b0b0"/><rect x="65.0" y="117.0" width="2" height="2" fill="#fafafa"/><rect x="66.0" y="118.0" width="1.5" height="1.5" fill="#b0b0b0"/><rect x="67.5" y="120.0" width="2" height="2" fill="#fafafa"/><rect x="68.5" y="121.0" width="1.5" height="1.5" fill="#b0b0b0"/><rect x="65.0" y="123.0" width="2" height="2" fill="#fafafa"/><rect x="66.0" y="124.0" width="1.5" height="1.5" fill="#b0b0b0"/>
<g opacity="0.7" transform="translate(84,112) rotate(33)"><rect x="-3.2" y="-13" width="6.4" height="17" fill="#d8a890" stroke="#8a7a40" stroke-width="0.5"/><path d="M-1 -13v17" stroke="#fff" stroke-width="0.8" opacity="0.6"/><path d="M-3.2 4l3.2 7l3.2 -7z" fill="#ddd" stroke="#666" stroke-width="0.5"/><path d="M-1 9l1 2.2l1 -2.2z" fill="#222"/><rect x="-3.2" y="-15.5" width="6.4" height="2.5" fill="#f4f4f4" stroke="#999" stroke-width="0.4"/></g><g opacity="0.9" transform="translate(90,113) rotate(33)"><rect x="-3.2" y="-13" width="6.4" height="17" fill="#e8a080" stroke="#8a7a40" stroke-width="0.5"/><path d="M-1 -13v17" stroke="#fff" stroke-width="0.8" opacity="0.6"/><path d="M-3.2 4l3.2 7l3.2 -7z" fill="#ddd" stroke="#666" stroke-width="0.5"/><path d="M-1 9l1 2.2l1 -2.2z" fill="#222"/><rect x="-3.2" y="-15.5" width="6.4" height="2.5" fill="#f4f4f4" stroke="#999" stroke-width="0.4"/></g><path d="M92.7 119h7.6l-3.8 6.5z" fill="#5a5a5a"/>
<g opacity="1" transform="translate(125,113) rotate(33)"><rect x="-3.2" y="-13" width="6.4" height="17" fill="#e4cc30" stroke="#8a7a40" stroke-width="0.5"/><path d="M-1 -13v17" stroke="#fff" stroke-width="0.8" opacity="0.6"/><path d="M-3.2 4l3.2 7l3.2 -7z" fill="#ddd" stroke="#666" stroke-width="0.5"/><path d="M-1 9l1 2.2l1 -2.2z" fill="#222"/><rect x="-3.2" y="-15.5" width="6.4" height="2.5" fill="#f4f4f4" stroke="#999" stroke-width="0.4"/></g>
<g opacity="0.45"><rect x="151" y="100" width="20" height="21" rx="2" fill="#6b96c8" stroke="#4a72a4" stroke-width="0.8"/><rect x="154" y="101.5" width="14" height="8" fill="#f2f2f2"/><path d="M156 104h10M156 106h10M156 108h10" stroke="#555" stroke-width="0.8"/><rect x="155" y="113" width="12" height="7" fill="#eaeaea"/><rect x="156.5" y="114.5" width="2.5" height="4" fill="#2f4f78"/></g><g opacity="0.9" transform="translate(167.5,115) rotate(33)"><rect x="-3.2" y="-13" width="6.4" height="17" fill="#e8a080" stroke="#8a7a40" stroke-width="0.5"/><path d="M-1 -13v17" stroke="#fff" stroke-width="0.8" opacity="0.6"/><path d="M-3.2 4l3.2 7l3.2 -7z" fill="#ddd" stroke="#666" stroke-width="0.5"/><path d="M-1 9l1 2.2l1 -2.2z" fill="#222"/><rect x="-3.2" y="-15.5" width="6.4" height="2.5" fill="#f4f4f4" stroke="#999" stroke-width="0.4"/></g>
<g fill="#c2dec2" stroke="#8f9a8f" stroke-width="0.8"><circle cx="196.5" cy="104" r="2.4"/><circle cx="207.5" cy="104" r="2.4"/><circle cx="191" cy="113.5" r="2.4"/></g><g opacity="0.7"><rect x="201.5" y="112" width="10" height="10" rx="2" fill="#d9ad14" stroke="#b08a00" stroke-width="0.6"/><path d="M206.5 113.8v6.4M203.7 115.4l5.6 3.2M203.7 118.6l5.6 -3.2" stroke="#fff" stroke-width="1.2"/></g>
<path opacity="1" d="M228.3 105.5C227.0 101.1 233.3 99.6 236.4 101.1C239.6 102.2 244.8 99.8 247.4 103.3C248.8 106.6 247.2 111.0 243.4 109.7C239.6 108.4 236.4 108.8 233.3 110.6C229.5 111.9 227.0 109.0 228.3 105.5Z" fill="#c2dec2" stroke="#8a8f8a" stroke-width="1"/><g opacity="0.7"><rect x="240" y="112" width="10" height="10" rx="1" fill="#6a92c6"/><path d="M242 117h5M245 114.5l2.5 2.5l-2.5 2.5" stroke="#fff" stroke-width="1.4" fill="none"/></g>
<path d="M267 121l6 -16h13" stroke="#aaa" stroke-width="0.9" fill="none"/><circle cx="273" cy="105" r="2.5" fill="#b8d8b8" stroke="#8ab08a" stroke-width="0.8"/><path d="M276 120l8 -8M278 111l7 9" stroke="#d8b860" stroke-width="2.2" opacity="0.85"/>
<rect x="305.5" y="102" width="14" height="13" fill="#f3ea9a" stroke="#c8b040" stroke-width="0.8" stroke-dasharray="1.2 1"/><g opacity="0.7"><rect x="315" y="113" width="10" height="10" rx="1.5" fill="#e23a3a" stroke="#b82020" stroke-width="0.6"/><path d="M317.5 115.5l5 5M322.5 115.5l-5 5" stroke="#fff" stroke-width="1.6"/></g>
<path d="M341 105l18 9M341 116l18 -9" stroke="#999" stroke-width="1"/><circle cx="359" cy="104" r="3" fill="none" stroke="#e05858" stroke-width="1.4"/><circle cx="359" cy="116" r="3" fill="none" stroke="#e05858" stroke-width="1.4"/>
<g opacity="0.6"><path d="M386 102h7l3 3v13h-10z" fill="#fff" stroke="#888" stroke-width="0.8"/><path d="M381 104.5h7l3 3v13h-10z" fill="#fff" stroke="#888" stroke-width="0.8"/><path d="M383 110h6M383 112.5h6M383 115h6M383 117.5h6" stroke="#777" stroke-width="0.7"/></g>
<g opacity="0.55"><rect x="420.5" y="101.5" width="15" height="19" fill="#fff" stroke="#d0a060" stroke-width="1"/><rect x="424" y="100" width="8" height="3.5" fill="#eee" stroke="#b08040" stroke-width="0.7"/><path d="M423 108h10M423 111h10M423 114h10" stroke="#888" stroke-width="0.8"/></g>
<rect x="453.7" y="99.0" width="2" height="2" fill="#fafafa"/><rect x="454.7" y="100.0" width="1.5" height="1.5" fill="#b0b0b0"/><rect x="456.2" y="102.0" width="2" height="2" fill="#fafafa"/><rect x="457.2" y="103.0" width="1.5" height="1.5" fill="#b0b0b0"/><rect x="453.7" y="105.0" width="2" height="2" fill="#fafafa"/><rect x="454.7" y="106.0" width="1.5" height="1.5" fill="#b0b0b0"/><rect x="456.2" y="108.0" width="2" height="2" fill="#fafafa"/><rect x="457.2" y="109.0" width="1.5" height="1.5" fill="#b0b0b0"/><rect x="453.7" y="111.0" width="2" height="2" fill="#fafafa"/><rect x="454.7" y="112.0" width="1.5" height="1.5" fill="#b0b0b0"/><rect x="456.2" y="114.0" width="2" height="2" fill="#fafafa"/><rect x="457.2" y="115.0" width="1.5" height="1.5" fill="#b0b0b0"/><rect x="453.7" y="117.0" width="2" height="2" fill="#fafafa"/><rect x="454.7" y="118.0" width="1.5" height="1.5" fill="#b0b0b0"/><rect x="456.2" y="120.0" width="2" height="2" fill="#fafafa"/><rect x="457.2" y="121.0" width="1.5" height="1.5" fill="#b0b0b0"/><rect x="453.7" y="123.0" width="2" height="2" fill="#fafafa"/><rect x="454.7" y="124.0" width="1.5" height="1.5" fill="#b0b0b0"/>
<g opacity="1"><path d="M463 110l5 -5h16v10h-16z" fill="#f2d54a" stroke="#a08820" stroke-width="0.8"/><text x="476.0" y="113.3" text-anchor="middle" font-family="Liberation Sans" font-weight="bold" font-size="9" fill="#222">abc</text></g>
<rect x="501" y="103" width="24" height="18" fill="#d8e4f4" stroke="#7aa0d8" stroke-width="0.9"/><g opacity="1"><path d="M503 110l5 -5h13v10h-13z" fill="#f2d54a" stroke="#a08820" stroke-width="0.8"/><text x="514.5" y="113.3" text-anchor="middle" font-family="Liberation Sans" font-weight="bold" font-size="9" fill="#222">ab</text></g><circle cx="519" cy="116" r="3.5" fill="#c81818"/>
<g opacity="0.55"><path d="M540 110l5 -5h13v10h-13z" fill="#f2d54a" stroke="#a08820" stroke-width="0.8"/><text x="551.5" y="113.3" text-anchor="middle" font-family="Liberation Sans" font-weight="bold" font-size="9" fill="#222">ab</text></g><circle cx="557" cy="117" r="3.5" fill="#d06060" opacity="0.8"/>
<g opacity="0.55"><path d="M577 109l5 -5h16v10h-16z" fill="#f2d54a" stroke="#a08820" stroke-width="0.8"/><text x="590.0" y="112.3" text-anchor="middle" font-family="Liberation Sans" font-weight="bold" font-size="9" fill="#222">abc</text></g><path d="M586 117c3 -3 8 -3 11 0c-3 3 -8 3 -11 0z" fill="#fff" stroke="#7090b0" stroke-width="0.8" opacity="0.8"/><circle cx="591.5" cy="117" r="1.5" fill="#345"/>
<g opacity="0.55"><path d="M615 109l5 -5h16v10h-16z" fill="#f2d54a" stroke="#a08820" stroke-width="0.8"/><text x="628.0" y="112.3" text-anchor="middle" font-family="Liberation Sans" font-weight="bold" font-size="9" fill="#222">abc</text></g><g opacity="0.7"><rect x="628" y="113" width="10" height="10" rx="1" fill="#6a92c6"/><path d="M630 118h5M633 115.5l2.5 2.5l-2.5 2.5" stroke="#fff" stroke-width="1.4" fill="none"/></g>
<g opacity="0.55"><path d="M653 109l5 -5h16v10h-16z" fill="#f2d54a" stroke="#a08820" stroke-width="0.8"/><text x="666.0" y="112.3" text-anchor="middle" font-family="Liberation Sans" font-weight="bold" font-size="9" fill="#222">abc</text></g><rect x="666" y="113" width="10" height="10" rx="1" fill="#8aaad0" opacity="0.8"/>
<g opacity="0.55"><path d="M691 109l5 -5h16v10h-16z" fill="#f2d54a" stroke="#a08820" stroke-width="0.8"/><text x="704.0" y="112.3" text-anchor="middle" font-family="Liberation Sans" font-weight="bold" font-size="9" fill="#222">abc</text></g><g opacity="0.8"><rect x="705" y="113" width="10" height="10" rx="2" fill="#e0c860"/><path d="M707.5 120.5l5 -5" stroke="#fff" stroke-width="1.8"/></g>
<rect x="728.0" y="99.0" width="2" height="2" fill="#fafafa"/><rect x="729.0" y="100.0" width="1.5" height="1.5" fill="#b0b0b0"/><rect x="730.5" y="102.0" width="2" height="2" fill="#fafafa"/><rect x="731.5" y="103.0" width="1.5" height="1.5" fill="#b0b0b0"/><rect x="728.0" y="105.0" width="2" height="2" fill="#fafafa"/><rect x="729.0" y="106.0" width="1.5" height="1.5" fill="#b0b0b0"/><rect x="730.5" y="108.0" width="2" height="2" fill="#fafafa"/><rect x="731.5" y="109.0" width="1.5" height="1.5" fill="#b0b0b0"/><rect x="728.0" y="111.0" width="2" height="2" fill="#fafafa"/><rect x="729.0" y="112.0" width="1.5" height="1.5" fill="#b0b0b0"/><rect x="730.5" y="114.0" width="2" height="2" fill="#fafafa"/><rect x="731.5" y="115.0" width="1.5" height="1.5" fill="#b0b0b0"/><rect x="728.0" y="117.0" width="2" height="2" fill="#fafafa"/><rect x="729.0" y="118.0" width="1.5" height="1.5" fill="#b0b0b0"/><rect x="730.5" y="120.0" width="2" height="2" fill="#fafafa"/><rect x="731.5" y="121.0" width="1.5" height="1.5" fill="#b0b0b0"/><rect x="728.0" y="123.0" width="2" height="2" fill="#fafafa"/><rect x="729.0" y="124.0" width="1.5" height="1.5" fill="#b0b0b0"/><rect x="741.6" y="99.0" width="2" height="2" fill="#fafafa"/><rect x="742.6" y="100.0" width="1.5" height="1.5" fill="#b0b0b0"/><rect x="744.1" y="102.0" width="2" height="2" fill="#fafafa"/><rect x="745.1" y="103.0" width="1.5" height="1.5" fill="#b0b0b0"/><rect x="741.6" y="105.0" width="2" height="2" fill="#fafafa"/><rect x="742.6" y="106.0" width="1.5" height="1.5" fill="#b0b0b0"/><rect x="744.1" y="108.0" width="2" height="2" fill="#fafafa"/><rect x="745.1" y="109.0" width="1.5" height="1.5" fill="#b0b0b0"/><rect x="741.6" y="111.0" width="2" height="2" fill="#fafafa"/><rect x="742.6" y="112.0" width="1.5" height="1.5" fill="#b0b0b0"/><rect x="744.1" y="114.0" width="2" height="2" fill="#fafafa"/><rect x="745.1" y="115.0" width="1.5" height="1.5" fill="#b0b0b0"/><rect x="741.6" y="117.0" width="2" height="2" fill="#fafafa"/><rect x="742.6" y="118.0" width="1.5" height="1.5" fill="#b0b0b0"/><rect x="744.1" y="120.0" width="2" height="2" fill="#fafafa"/><rect x="745.1" y="121.0" width="1.5" height="1.5" fill="#b0b0b0"/><rect x="741.6" y="123.0" width="2" height="2" fill="#fafafa"/><rect x="742.6" y="124.0" width="1.5" height="1.5" fill="#b0b0b0"/>
<rect x="65.0" y="135.0" width="2" height="2" fill="#fafafa"/><rect x="66.0" y="136.0" width="1.5" height="1.5" fill="#b0b0b0"/><rect x="67.5" y="138.0" width="2" height="2" fill="#fafafa"/><rect x="68.5" y="139.0" width="1.5" height="1.5" fill="#b0b0b0"/><rect x="65.0" y="141.0" width="2" height="2" fill="#fafafa"/><rect x="66.0" y="142.0" width="1.5" height="1.5" fill="#b0b0b0"/><rect x="67.5" y="144.0" width="2" height="2" fill="#fafafa"/><rect x="68.5" y="145.0" width="1.5" height="1.5" fill="#b0b0b0"/><rect x="65.0" y="147.0" width="2" height="2" fill="#fafafa"/><rect x="66.0" y="148.0" width="1.5" height="1.5" fill="#b0b0b0"/><rect x="67.5" y="150.0" width="2" height="2" fill="#fafafa"/><rect x="68.5" y="151.0" width="1.5" height="1.5" fill="#b0b0b0"/><rect x="65.0" y="153.0" width="2" height="2" fill="#fafafa"/><rect x="66.0" y="154.0" width="1.5" height="1.5" fill="#b0b0b0"/><rect x="67.5" y="156.0" width="2" height="2" fill="#fafafa"/><rect x="68.5" y="157.0" width="1.5" height="1.5" fill="#b0b0b0"/><rect x="65.0" y="159.0" width="2" height="2" fill="#fafafa"/><rect x="66.0" y="160.0" width="1.5" height="1.5" fill="#b0b0b0"/>
<g opacity="0.95"><path d="M86 150c6 -1 8 -4 7 -6c-1 -3 -4 -3 -8 -3" stroke="#a8cca8" stroke-width="4.5" fill="none"/><path d="M77 141l8 -6v12z" fill="#a8cca8"/></g>
<g opacity="0.95"><path d="M124 150c-6 -1 -8 -4 -7 -6c1 -3 4 -3 8 -3" stroke="#a8cca8" stroke-width="4.5" fill="none"/><path d="M133 141l-8 -6v12z" fill="#a8cca8"/></g>
<path opacity="1" d="M152.3 143.0C151.0 138.2 157.6 136.5 160.9 138.2C164.2 139.4 169.7 136.8 172.3 140.6C173.9 144.2 172.1 149.0 168.2 147.6C164.2 146.1 160.9 146.6 157.6 148.5C153.6 150.0 151.0 146.8 152.3 143.0Z" fill="#c2dec2" stroke="#8a8f8a" stroke-width="1"/><g opacity="0.7"><rect x="163" y="148" width="10" height="10" rx="1" fill="#6a92c6"/><path d="M165 153h5M168 150.5l2.5 2.5l-2.5 2.5" stroke="#fff" stroke-width="1.4" fill="none"/></g>
<circle cx="196" cy="143" r="7" fill="#b8d8b8" stroke="#8ab08a" stroke-width="0.8"/><path d="M199 147l6 -3l6 3v6l-6 4l-6 -4z" fill="#b8cfe4" stroke="#7a9cc0" stroke-width="0.8"/>
<path opacity="1" d="M228.3 142.0C227.0 137.2 233.6 135.5 236.9 137.2C240.2 138.4 245.7 135.8 248.3 139.6C249.9 143.2 248.1 148.0 244.2 146.6C240.2 145.1 236.9 145.6 233.6 147.5C229.6 149.0 227.0 145.8 228.3 142.0Z" fill="#c2dec2" stroke="#8a8f8a" stroke-width="1"/><ellipse cx="235" cy="141" rx="4" ry="3" fill="#eee" stroke="#8ab08a" stroke-width="0.8"/><g opacity="0.7"><rect x="240" y="148" width="10" height="10" rx="2" fill="#d9ad14" stroke="#b08a00" stroke-width="0.6"/><path d="M245 149.8v6.4M242.2 151.4l5.6 3.2M242.2 154.6l5.6 -3.2" stroke="#fff" stroke-width="1.2"/></g>
<path opacity="1" d="M267.3 141.0C266.0 136.2 272.6 134.5 275.9 136.2C279.2 137.4 284.7 134.8 287.3 138.6C288.9 142.2 287.1 147.0 283.2 145.6C279.2 144.1 275.9 144.6 272.6 146.5C268.6 148.0 266.0 144.8 267.3 141.0Z" fill="#c8c8c8" stroke="#aaa" stroke-width="1"/><ellipse cx="270" cy="154" rx="5" ry="5" fill="#b8d8b8" stroke="#8ab08a" stroke-width="0.8"/><g opacity="0.7"><rect x="278" y="148" width="10" height="10" rx="2" fill="#d9ad14" stroke="#b08a00" stroke-width="0.6"/><path d="M283 149.8v6.4M280.2 151.4l5.6 3.2M280.2 154.6l5.6 -3.2" stroke="#fff" stroke-width="1.2"/></g>
<path opacity="1" d="M304.3 142.0C303.0 137.2 309.6 135.5 312.9 137.2C316.2 138.4 321.7 135.8 324.3 139.6C325.9 143.2 324.1 148.0 320.2 146.6C316.2 145.1 312.9 145.6 309.6 147.5C305.6 149.0 303.0 145.8 304.3 142.0Z" fill="#c2dec2" stroke="#8a8f8a" stroke-width="1"/><ellipse cx="311" cy="141" rx="4" ry="3" fill="#eee" stroke="#8ab08a" stroke-width="0.8"/><g opacity="0.5"><rect x="315" y="148" width="10" height="10" rx="1.5" fill="#e23a3a" stroke="#b82020" stroke-width="0.6"/><path d="M317.5 150.5l5 5M322.5 150.5l-5 5" stroke="#fff" stroke-width="1.6"/></g>
<path opacity="1" d="M342.3 141.0C341.0 136.2 347.6 134.5 350.9 136.2C354.2 137.4 359.7 134.8 362.3 138.6C363.9 142.2 362.1 147.0 358.2 145.6C354.2 144.1 350.9 144.6 347.6 146.5C343.6 148.0 341.0 144.8 342.3 141.0Z" fill="#c8c8c8" stroke="#aaa" stroke-width="1"/><ellipse cx="346" cy="154" rx="5" ry="5" fill="#b8d8b8" stroke="#8ab08a" stroke-width="0.8"/><g opacity="0.5"><rect x="353" y="148" width="10" height="10" rx="1.5" fill="#e23a3a" stroke="#b82020" stroke-width="0.6"/><path d="M355.5 150.5l5 5M360.5 150.5l-5 5" stroke="#fff" stroke-width="1.6"/></g>
<path opacity="1" d="M380.3 143.5C379.0 138.3 385.6 136.5 388.9 138.3C392.2 139.6 397.7 136.7 400.3 140.9C401.9 144.8 400.1 150.0 396.2 148.4C392.2 146.9 388.9 147.4 385.6 149.5C381.6 151.0 379.0 147.7 380.3 143.5Z" fill="#c2dec2" stroke="#8a8f8a" stroke-width="1"/><path d="M380 146c2 6 6 6 9 3z" fill="#f0e07a" opacity="0.9"/>
<ellipse cx="428" cy="144" rx="11" ry="7" fill="#f0e07a" stroke="#b8a040" stroke-width="0.8"/><ellipse cx="428" cy="144" rx="7.5" ry="4" fill="#b8d8b8"/>
<path opacity="1" d="M456.3 143.5C455.0 138.3 461.3 136.5 464.4 138.3C467.6 139.6 472.9 136.7 475.4 140.9C476.8 144.8 475.2 150.0 471.4 148.4C467.6 146.9 464.4 147.4 461.3 149.5C457.5 151.0 455.0 147.7 456.3 143.5Z" fill="#c2dec2" stroke="#8a8f8a" stroke-width="1"/><path d="M463 137l3 8l-4 5M468 137l-2 8" stroke="#888" stroke-width="0.9" fill="none"/><circle cx="461" cy="155" r="2.5" fill="none" stroke="#e05858" stroke-width="1.2"/><circle cx="469" cy="155" r="2.5" fill="none" stroke="#e05858" stroke-width="1.2"/>
<path opacity="1" d="M494.3 142.5C493.0 137.3 499.6 135.5 502.9 137.3C506.2 138.6 511.7 135.7 514.3 139.9C515.9 143.8 514.1 149.0 510.2 147.4C506.2 145.9 502.9 146.4 499.6 148.5C495.6 150.0 493.0 146.7 494.3 142.5Z" fill="#c2dec2" stroke="#8a8f8a" stroke-width="1"/><path d="M502 137v10M506 137v10M501 140h8M501 143h8" stroke="#888" stroke-width="0.8"/><path d="M503 149c3 2 -3 4 0 6c2 1 -1 2 2 4" stroke="#888" stroke-width="0.8" fill="none"/>
<path d="M543 135l-6 8l4 2l7 -8z" fill="#e0e0e0" stroke="#999" stroke-width="0.8"/><path d="M533 154h19v4h-19z" fill="#b8cfe4" stroke="#7a9cc0" stroke-width="0.8"/><path d="M542 148l2 4l-2 2l-2 -2z" fill="#f5e890"/>
<path d="M572 151a8 8 0 1 1 12 -9" stroke="#6a98d8" stroke-width="2" fill="none"/><path d="M588 141l-2 6l-5 -4z" fill="#6a98d8"/>
<rect x="606.0" y="135.0" width="2" height="2" fill="#fafafa"/><rect x="607.0" y="136.0" width="1.5" height="1.5" fill="#b0b0b0"/><rect x="608.5" y="138.0" width="2" height="2" fill="#fafafa"/><rect x="609.5" y="139.0" width="1.5" height="1.5" fill="#b0b0b0"/><rect x="606.0" y="141.0" width="2" height="2" fill="#fafafa"/><rect x="607.0" y="142.0" width="1.5" height="1.5" fill="#b0b0b0"/><rect x="608.5" y="144.0" width="2" height="2" fill="#fafafa"/><rect x="609.5" y="145.0" width="1.5" height="1.5" fill="#b0b0b0"/><rect x="606.0" y="147.0" width="2" height="2" fill="#fafafa"/><rect x="607.0" y="148.0" width="1.5" height="1.5" fill="#b0b0b0"/><rect x="608.5" y="150.0" width="2" height="2" fill="#fafafa"/><rect x="609.5" y="151.0" width="1.5" height="1.5" fill="#b0b0b0"/><rect x="606.0" y="153.0" width="2" height="2" fill="#fafafa"/><rect x="607.0" y="154.0" width="1.5" height="1.5" fill="#b0b0b0"/><rect x="608.5" y="156.0" width="2" height="2" fill="#fafafa"/><rect x="609.5" y="157.0" width="1.5" height="1.5" fill="#b0b0b0"/><rect x="606.0" y="159.0" width="2" height="2" fill="#fafafa"/><rect x="607.0" y="160.0" width="1.5" height="1.5" fill="#b0b0b0"/>
<path d="M616 156v-17c0 -2 3 -2 3 0v17M620 156v-18c0 -2 3 -2 3 0v18" stroke="#999" stroke-width="0.9" fill="none"/><rect x="620" y="139" width="14" height="17" fill="none" stroke="#999" stroke-width="0.8"/><path d="M627 149l1 -7M630 149l0 -8M633 149l-1 -7" stroke="#5aa05a" stroke-width="1.2"/><rect x="628" y="148" width="11" height="11" rx="2" fill="#2f5878"/><path d="M631 155h5M633.5 151v5" stroke="#fff" stroke-width="1.2"/>
<path d="M654 156v-17c0 -2 3 -2 3 0v17M658 156v-18c0 -2 3 -2 3 0v18" stroke="#999" stroke-width="0.9" fill="none"/><rect x="658" y="139" width="14" height="17" fill="none" stroke="#999" stroke-width="0.8"/><path d="M665 149l1 -7M668 149l0 -8M671 149l-1 -7" stroke="#5aa05a" stroke-width="1.2"/><g opacity="1"><rect x="666" y="148" width="10" height="10" rx="2" fill="#d9ad14" stroke="#b08a00" stroke-width="0.6"/><path d="M671 149.8v6.4M668.2 151.4l5.6 3.2M668.2 154.6l5.6 -3.2" stroke="#fff" stroke-width="1.2"/></g>
<g opacity="0.45"><path d="M692 156v-17c0 -2 3 -2 3 0v17M696 156v-18c0 -2 3 -2 3 0v18" stroke="#999" stroke-width="0.9" fill="none"/><rect x="696" y="139" width="14" height="17" fill="none" stroke="#999" stroke-width="0.8"/><path d="M703 149l1 -7M706 149l0 -8M709 149l-1 -7" stroke="#5aa05a" stroke-width="1.2"/><g opacity="1"><rect x="704" y="148" width="10" height="10" rx="2" fill="#e88a8a"/><path d="M706 153h6" stroke="#fff" stroke-width="2"/></g></g>
<path d="M726.5 133v30" stroke="#777" stroke-width="1" stroke-dasharray="1 2"/>
<path d="M740 149v11h12" stroke="#888" stroke-width="0.9" fill="none"/><g opacity="1"><path d="M743 139l6 12l6 -12h6" stroke="#2e5f8e" stroke-width="1.4" fill="none"/><circle cx="743" cy="139" r="1.5" fill="#fff" stroke="#2e5f8e" stroke-width="1"/><circle cx="755" cy="139" r="1.5" fill="#fff" stroke="#2e5f8e" stroke-width="1"/><circle cx="761" cy="139" r="1.5" fill="#fff" stroke="#2e5f8e" stroke-width="1"/></g><path d="M752 152l1 -8M756 152v-9M759 152l-1 -8" stroke="#5aa05a" stroke-width="1.2"/><g opacity="1"><rect x="753" y="148" width="10" height="10" rx="2" fill="#5b9b5b" stroke="#3f7a3f" stroke-width="0.6"/><path d="M758 150v6M755 153h6" stroke="#fff" stroke-width="2"/></g>
<path d="M778 149v11h12" stroke="#888" stroke-width="0.9" fill="none"/><rect x="785" y="136" width="12" height="12" fill="#3e6a8e"/><rect x="785" y="136" width="4" height="4" fill="#1e3a5a"/><rect x="793" y="140" width="4" height="4" fill="#6a98c8"/><g opacity="1"><rect x="791" y="148" width="10" height="10" rx="2" fill="#5b9b5b" stroke="#3f7a3f" stroke-width="0.6"/><path d="M796 150v6M793 153h6" stroke="#fff" stroke-width="2"/></g>
<g opacity="0.55"><path d="M816 149v11h12" stroke="#888" stroke-width="0.9" fill="none"/><g opacity="1"><path d="M819 139l6 12l6 -12h6" stroke="#2e5f8e" stroke-width="1.4" fill="none"/><circle cx="819" cy="139" r="1.5" fill="#fff" stroke="#2e5f8e" stroke-width="1"/><circle cx="831" cy="139" r="1.5" fill="#fff" stroke="#2e5f8e" stroke-width="1"/><circle cx="837" cy="139" r="1.5" fill="#fff" stroke="#2e5f8e" stroke-width="1"/></g><path d="M829 152l1 -8M833 152v-9" stroke="#5aa05a" stroke-width="1.2"/></g><g opacity="0.7"><rect x="829" y="148" width="10" height="10" rx="2" fill="#d9ad14" stroke="#b08a00" stroke-width="0.6"/><path d="M834 149.8v6.4M831.2 151.4l5.6 3.2M831.2 154.6l5.6 -3.2" stroke="#fff" stroke-width="1.2"/></g>
<g opacity="0.55"><path d="M854 149v11h12" stroke="#888" stroke-width="0.9" fill="none"/><g opacity="1"><path d="M857 139l6 12l6 -12h6" stroke="#2e5f8e" stroke-width="1.4" fill="none"/><circle cx="857" cy="139" r="1.5" fill="#fff" stroke="#2e5f8e" stroke-width="1"/><circle cx="869" cy="139" r="1.5" fill="#fff" stroke="#2e5f8e" stroke-width="1"/><circle cx="875" cy="139" r="1.5" fill="#fff" stroke="#2e5f8e" stroke-width="1"/></g><path d="M867 152l1 -8M871 152v-9" stroke="#5aa05a" stroke-width="1.2"/></g><g opacity="0.7"><rect x="867" y="148" width="10" height="10" rx="2" fill="#d8b848"/><path d="M869.5 155.5l5 -5" stroke="#fff" stroke-width="1.8"/></g>
<g opacity="0.6"><path d="M897 156l10 -14" stroke="#d8c030" stroke-width="2.4"/><path d="M897 139l8 3l-2 4l-7 -2z" fill="#999"/><path d="M905 160v-16M908 160v-17M911 160v-16M914 160v-15" stroke="#70a870" stroke-width="1"/></g>
<g opacity="0.6"><path d="M930 157v-20c0 -2 3 -2 3 0v2h16v18z" fill="#fff" stroke="#999" stroke-width="0.8"/><rect x="934" y="142" width="10" height="11" fill="#dde8f4" stroke="#345" stroke-width="0.7" stroke-dasharray="1.5 1"/><path d="M944 159v-14M947 159v-15M950 159v-14" stroke="#70a870" stroke-width="1"/></g>
<g opacity="0.6"><path d="M968 157v-20c0 -2 3 -2 3 0v2h16v18z" fill="#fff" stroke="#999" stroke-width="0.8"/><rect x="972" y="142" width="10" height="11" fill="#dde8f4" stroke="#345" stroke-width="0.7" stroke-dasharray="1.5 1"/></g><g opacity="0.75"><rect x="980" y="148" width="10" height="10" rx="2" fill="#d8b848"/><path d="M982.5 155.5l5 -5" stroke="#fff" stroke-width="1.8"/></g>
<rect x="65.0" y="171.0" width="2" height="2" fill="#fafafa"/><rect x="66.0" y="172.0" width="1.5" height="1.5" fill="#b0b0b0"/><rect x="68.0" y="173.5" width="2" height="2" fill="#fafafa"/><rect x="69.0" y="174.5" width="1.5" height="1.5" fill="#b0b0b0"/><rect x="71.0" y="171.0" width="2" height="2" fill="#fafafa"/><rect x="72.0" y="172.0" width="1.5" height="1.5" fill="#b0b0b0"/><rect x="74.0" y="173.5" width="2" height="2" fill="#fafafa"/><rect x="75.0" y="174.5" width="1.5" height="1.5" fill="#b0b0b0"/><rect x="77.0" y="171.0" width="2" height="2" fill="#fafafa"/><rect x="78.0" y="172.0" width="1.5" height="1.5" fill="#b0b0b0"/><rect x="80.0" y="173.5" width="2" height="2" fill="#fafafa"/><rect x="81.0" y="174.5" width="1.5" height="1.5" fill="#b0b0b0"/><rect x="83.0" y="171.0" width="2" height="2" fill="#fafafa"/><rect x="84.0" y="172.0" width="1.5" height="1.5" fill="#b0b0b0"/><rect x="86.0" y="173.5" width="2" height="2" fill="#fafafa"/><rect x="87.0" y="174.5" width="1.5" height="1.5" fill="#b0b0b0"/><rect x="89.0" y="171.0" width="2" height="2" fill="#fafafa"/><rect x="90.0" y="172.0" width="1.5" height="1.5" fill="#b0b0b0"/><rect x="92.0" y="173.5" width="2" height="2" fill="#fafafa"/><rect x="93.0" y="174.5" width="1.5" height="1.5" fill="#b0b0b0"/><rect x="95.0" y="171.0" width="2" height="2" fill="#fafafa"/><rect x="96.0" y="172.0" width="1.5" height="1.5" fill="#b0b0b0"/><rect x="98.0" y="173.5" width="2" height="2" fill="#fafafa"/><rect x="99.0" y="174.5" width="1.5" height="1.5" fill="#b0b0b0"/>
<path d="M71 185l7 16l7 -16h6" stroke="#2e4f78" stroke-width="1.5" fill="none"/><circle cx="71" cy="185" r="2" fill="#fff" stroke="#2e4f78" stroke-width="1.2"/><circle cx="78" cy="201" r="2" fill="#fff" stroke="#2e4f78" stroke-width="1.2"/><circle cx="85" cy="185" r="2" fill="#fff" stroke="#2e4f78" stroke-width="1.2"/><circle cx="91" cy="185" r="2" fill="#fff" stroke="#2e4f78" stroke-width="1.2"/><g opacity="1"><rect x="83" y="196" width="10" height="10" rx="2" fill="#5b9b5b" stroke="#3f7a3f" stroke-width="0.6"/><path d="M88 198v6M85 201h6" stroke="#fff" stroke-width="2"/></g>
<rect x="69" y="220" width="19" height="19" fill="#6f9fd0"/><g fill="#1e3a5e"><rect x="69" y="220" width="6.3" height="6.3"/><rect x="81.6" y="220" width="6.3" height="6.3"/><rect x="75.3" y="226.3" width="6.3" height="6.3"/><rect x="69" y="232.6" width="6.3" height="6.3"/></g><g opacity="1"><rect x="83" y="233" width="10" height="10" rx="2" fill="#5b9b5b" stroke="#3f7a3f" stroke-width="0.6"/><path d="M88 235v6M85 238h6" stroke="#fff" stroke-width="2"/></g>
<g fill="#6d9fd4" stroke="#2e4f78" stroke-width="1.1"><ellipse cx="84" cy="264.5" rx="3" ry="5.8"/><ellipse cx="72.4" cy="264.5" rx="3.3" ry="6.4"/><path d="M75 262c0 -3 3 -4 5 -4c3 0 5 2 5 5c0 3 -2 4 -2.5 6v5.5c0 1.5 -1 2 -2.5 2c-1.5 0 -2.5 -0.5 -2.5 -2v-5c-1.5 -0.5 -2.5 -2 -2.5 -4z"/></g><path d="M76.2 263.5c0.5 -1.5 2 -1.5 2.5 0v4M83 270h3.5" stroke="#2e4f78" stroke-width="1" fill="none"/><g opacity="1"><rect x="83.5" y="272.5" width="10" height="10" rx="2" fill="#5b9b5b" stroke="#3f7a3f" stroke-width="0.6"/><path d="M88.5 274.5v6M85.5 277.5h6" stroke="#fff" stroke-width="2"/></g>
<path d="M70 319c4 -12 10 -20 21 -23c-2 8 -8 17 -17 19z" fill="#7aa6d4" stroke="#2e4f78" stroke-width="1"/><path d="M70 319l14 -15" stroke="#2e4f78" stroke-width="0.8"/><g opacity="1"><rect x="83" y="310" width="10" height="10" rx="2" fill="#5b9b5b" stroke="#3f7a3f" stroke-width="0.6"/><path d="M88 312v6M85 315h6" stroke="#fff" stroke-width="2"/></g>
<path d="M69 335c8 0 16 4 22 11c-7 1 -15 5 -21 10c3 -7 3 -14 -1 -21z" fill="#6f9fd0" stroke="#2e4f78" stroke-width="1.2"/><path d="M76 337c2 5 2 12 -1 16M82 340c2 4 1 8 -1 11" stroke="#2e4f78" stroke-width="0.9" fill="none"/><g opacity="1"><rect x="83" y="348" width="10" height="10" rx="2" fill="#5b9b5b" stroke="#3f7a3f" stroke-width="0.6"/><path d="M88 350v6M85 353h6" stroke="#fff" stroke-width="2"/></g>
<circle cx="80" cy="380" r="11" fill="#a8c4e6" stroke="#2e4f78" stroke-width="1"/><ellipse cx="80" cy="380" rx="4.95" ry="11" fill="none" stroke="#fff" stroke-width="0.9" opacity="0.8"/><path d="M69 380h22M70.65 374.5h18.7M70.65 385.5h18.7" stroke="#fff" stroke-width="0.9" opacity="0.8"/><g opacity="1"><rect x="83" y="386" width="10" height="10" rx="2" fill="#5b9b5b" stroke="#3f7a3f" stroke-width="0.6"/><path d="M88 388v6M85 391h6" stroke="#fff" stroke-width="2"/></g>
<circle cx="80" cy="419" r="11" fill="#3a6a9e" stroke="#2e4f78" stroke-width="1"/><ellipse cx="80" cy="419" rx="4.95" ry="11" fill="none" stroke="#fff" stroke-width="0.9" opacity="0.8"/><path d="M69 419h22M70.65 413.5h18.7M70.65 424.5h18.7" stroke="#fff" stroke-width="0.9" opacity="0.8"/><g opacity="1"><rect x="83" y="425" width="10" height="10" rx="2" fill="#5b9b5b" stroke="#3f7a3f" stroke-width="0.6"/><path d="M88 427v6M85 430h6" stroke="#fff" stroke-width="2"/></g>
<circle cx="80" cy="458" r="11" fill="#e6eef8" stroke="#6a98d8" stroke-width="1"/><ellipse cx="80" cy="458" rx="5" ry="11" fill="none" stroke="#6a98d8" stroke-width="0.8"/><path d="M69 458h22M70 452h20M70 464h20" stroke="#6a98d8" stroke-width="0.8"/><g opacity="1"><path d="M75 454l6 12l6 -12h6" stroke="#223" stroke-width="1.1" fill="none"/><circle cx="75" cy="454" r="1.5" fill="#fff" stroke="#223" stroke-width="1"/><circle cx="87" cy="454" r="1.5" fill="#fff" stroke="#223" stroke-width="1"/><circle cx="93" cy="454" r="1.5" fill="#fff" stroke="#223" stroke-width="1"/></g><g opacity="1"><rect x="83" y="464" width="10" height="10" rx="2" fill="#5b9b5b" stroke="#3f7a3f" stroke-width="0.6"/><path d="M88 466v6M85 469h6" stroke="#fff" stroke-width="2"/></g>
<path d="M79 490c3 -3 8 -2 8 3c0 5 -5 10 -10 12c3 -3 5 -6 5 -8c-3 1 -6 -4 -3 -7z" fill="#4a7ab0" stroke="#2e4f78" stroke-width="0.6"/><g opacity="1"><rect x="83" y="503" width="10" height="10" rx="2" fill="#5b9b5b" stroke="#3f7a3f" stroke-width="0.6"/><path d="M88 505v6M85 508h6" stroke="#fff" stroke-width="2"/></g>
<path d="M71 526l7 16l7 -16h6" stroke="#2e4f78" stroke-width="1.5" fill="none"/><circle cx="71" cy="526" r="2" fill="#fff" stroke="#2e4f78" stroke-width="1.2"/><circle cx="78" cy="542" r="2" fill="#fff" stroke="#2e4f78" stroke-width="1.2"/><circle cx="85" cy="526" r="2" fill="#fff" stroke="#2e4f78" stroke-width="1.2"/><circle cx="91" cy="526" r="2" fill="#fff" stroke="#2e4f78" stroke-width="1.2"/><g opacity="1"><rect x="83" y="538" width="10" height="10" rx="2" fill="#d9ad14" stroke="#b08a00" stroke-width="0.6"/><path d="M88 539.8v6.4M85.2 541.4l5.6 3.2M85.2 544.6l5.6 -3.2" stroke="#fff" stroke-width="1.2"/></g><path d="M95.2 539h7.6l-3.8 6.5z" fill="#5a5a5a"/>
<rect x="71.5" y="566.5" width="16" height="16" fill="#ececec" stroke="#aaa" stroke-width="0.8"/><g opacity="1"><rect x="83" y="577" width="10" height="10" rx="2" fill="#e88a8a"/><path d="M85 582h6" stroke="#fff" stroke-width="2"/></g>
<rect x="67.0" y="600.0" width="2" height="2" fill="#fafafa"/><rect x="68.0" y="601.0" width="1.5" height="1.5" fill="#b0b0b0"/><rect x="70.0" y="602.5" width="2" height="2" fill="#fafafa"/><rect x="71.0" y="603.5" width="1.5" height="1.5" fill="#b0b0b0"/><rect x="73.0" y="600.0" width="2" height="2" fill="#fafafa"/><rect x="74.0" y="601.0" width="1.5" height="1.5" fill="#b0b0b0"/><rect x="76.0" y="602.5" width="2" height="2" fill="#fafafa"/><rect x="77.0" y="603.5" width="1.5" height="1.5" fill="#b0b0b0"/><rect x="79.0" y="600.0" width="2" height="2" fill="#fafafa"/><rect x="80.0" y="601.0" width="1.5" height="1.5" fill="#b0b0b0"/><rect x="82.0" y="602.5" width="2" height="2" fill="#fafafa"/><rect x="83.0" y="603.5" width="1.5" height="1.5" fill="#b0b0b0"/><rect x="85.0" y="600.0" width="2" height="2" fill="#fafafa"/><rect x="86.0" y="601.0" width="1.5" height="1.5" fill="#b0b0b0"/><rect x="88.0" y="602.5" width="2" height="2" fill="#fafafa"/><rect x="89.0" y="603.5" width="1.5" height="1.5" fill="#b0b0b0"/><rect x="91.0" y="600.0" width="2" height="2" fill="#fafafa"/><rect x="92.0" y="601.0" width="1.5" height="1.5" fill="#b0b0b0"/><rect x="94.0" y="602.5" width="2" height="2" fill="#fafafa"/><rect x="95.0" y="603.5" width="1.5" height="1.5" fill="#b0b0b0"/><rect x="97.0" y="600.0" width="2" height="2" fill="#fafafa"/><rect x="98.0" y="601.0" width="1.5" height="1.5" fill="#b0b0b0"/>
<circle cx="115" cy="176.8" r="7" fill="url(#dkbtn)"/><path d="M112 173.8l6 6M118 173.8l-6 6" stroke="#fff" stroke-width="2"/>
<circle cx="134.8" cy="176.8" r="7" fill="url(#dkbtn)"/><rect x="131" y="175.5" width="5.5" height="4.5" fill="none" stroke="#fff" stroke-width="1.2"/><path d="M133 175.5v-2h5.5v4.5h-2" stroke="#fff" stroke-width="1.2" fill="none"/>
<path d="M111.5 198.9h10l-5 8z" fill="#8a8a8a"/>
<rect x="133.5" y="195.0" width="13.5" height="13.5" rx="2" fill="url(#cbx)" stroke="#555f6a" stroke-width="1"/>
<path d="M136 201.5l3.5 4l7.5 -11" stroke="#1a2a3a" stroke-width="2.2" fill="none"/>
<g fill="#fff" stroke="#777" stroke-width="0.7"><path d="M162.2 206.5l1.2 -1.2l1.2 1.2l-1.2 1.2z"/><path d="M164.1 199.5l1.2 -1.2l1.2 1.2l-1.2 1.2z"/><path d="M171.2 196.5l1.2 -1.2l1.2 1.2l-1.2 1.2z"/></g>
<path d="M111.5 236.9h10l-5 8z" fill="#8a8a8a"/>
<rect x="133.5" y="233.0" width="13.5" height="13.5" rx="2" fill="url(#cbx)" stroke="#555f6a" stroke-width="1"/>
<path d="M136 239.5l3.5 4l7.5 -11" stroke="#1a2a3a" stroke-width="2.2" fill="none"/>
<g fill="#fff" stroke="#777" stroke-width="0.7"><path d="M162.2 244.5l1.2 -1.2l1.2 1.2l-1.2 1.2z"/><path d="M164.1 237.5l1.2 -1.2l1.2 1.2l-1.2 1.2z"/><path d="M171.2 234.5l1.2 -1.2l1.2 1.2l-1.2 1.2z"/></g>
<path d="M111.5 274.9h10l-5 8z" fill="#8a8a8a"/>
<rect x="133.5" y="271.0" width="13.5" height="13.5" rx="2" fill="url(#cbx)" stroke="#555f6a" stroke-width="1"/>
<path d="M136 277.5l3.5 4l7.5 -11" stroke="#1a2a3a" stroke-width="2.2" fill="none"/>
<path d="M160.5 274.5c0 -3 3 -3.5 6 -2.5c2.5 1 4 -1 6 -0.5c2 0.5 2 3 1 5c-1 2 -2.5 1.5 -5 1c-3 -0.5 -4 2.5 -6 2c-2 -0.5 -2 -3 -2 -5z" fill="#f0f0f0" stroke="#999" stroke-width="0.8"/>
<path d="M111.5 312.9h10l-5 8z" fill="#8a8a8a"/>
<rect x="133.5" y="309.0" width="13.5" height="13.5" rx="2" fill="url(#cbx)" stroke="#555f6a" stroke-width="1"/>
<path d="M136 315.5l3.5 4l7.5 -11" stroke="#1a2a3a" stroke-width="2.2" fill="none"/>
<path d="M160.5 312.5c0 -3 3 -3.5 6 -2.5c2.5 1 4 -1 6 -0.5c2 0.5 2 3 1 5c-1 2 -2.5 1.5 -5 1c-3 -0.5 -4 2.5 -6 2c-2 -0.5 -2 -3 -2 -5z" fill="#f0f0f0" stroke="#999" stroke-width="0.8"/>
<path d="M111.5 350.9h10l-5 8z" fill="#8a8a8a"/>
<rect x="133.5" y="347.0" width="13.5" height="13.5" rx="2" fill="url(#cbx)" stroke="#555f6a" stroke-width="1"/>
<path d="M136 353.5l3.5 4l7.5 -11" stroke="#1a2a3a" stroke-width="2.2" fill="none"/>
<path d="M160.5 350.5c0 -3 3 -3.5 6 -2.5c2.5 1 4 -1 6 -0.5c2 0.5 2 3 1 5c-1 2 -2.5 1.5 -5 1c-3 -0.5 -4 2.5 -6 2c-2 -0.5 -2 -3 -2 -5z" fill="#f0f0f0" stroke="#999" stroke-width="0.8"/>
<path d="M111.5 388.9h10l-5 8z" fill="#8a8a8a"/>
<rect x="133.5" y="385.0" width="13.5" height="13.5" rx="2" fill="url(#cbx)" stroke="#555f6a" stroke-width="1"/>
<path d="M136 391.5l3.5 4l7.5 -11" stroke="#1a2a3a" stroke-width="2.2" fill="none"/>
<path d="M161 386.5l4.5 12l5 -11l3 -1" stroke="#888" stroke-width="0.8" fill="none"/><circle cx="173.5" cy="386.0" r="1" fill="#fff" stroke="#888" stroke-width="0.6"/>
<circle cx="158.9" cy="220.8" r="3" fill="#58b6ae" stroke="#1a1a1a" stroke-width="0.8"/>
<circle cx="158.9" cy="258.9" r="5.6" fill="#b42020" stroke="#1a1a1a" stroke-width="0.9"/>
<rect x="151.5" y="289.5" width="13" height="13" fill="#cccccc" stroke="#bbb" stroke-width="0.8"/>
<rect x="151.5" y="327.5" width="13" height="13" fill="#fa2545" stroke="#444" stroke-width="0.8"/>
<rect x="151.5" y="365.5" width="13" height="13" fill="#f0b0ce" stroke="#444" stroke-width="0.8"/>
<path d="M151 411.5h16" stroke="#9a50e8" stroke-width="1"/>
<rect x="1174.5" y="1183.5" width="19" height="19" fill="#f4f4f4" stroke="#888" stroke-width="0.8"/><circle cx="1182" cy="1190" r="4" fill="none" stroke="#222" stroke-width="1.6"/><circle cx="1185" cy="1196" r="3" fill="none" stroke="#222" stroke-width="1.4"/>
<path d="M1714.5 1188v13" stroke="#bbb" stroke-width="0.8"/><path d="M1718 1193h6l-3 3.5z" fill="#444"/>
<rect x="1735.5" y="1183.5" width="19" height="19" fill="#f4f4f4" stroke="#888" stroke-width="0.8"/><path d="M1739 1200c4 -2 8 -6 12 -13" stroke="#777" stroke-width="2.4"/><circle cx="1742" cy="1189" r="3.5" fill="none" stroke="#e02020" stroke-width="1.2"/><path d="M1739.5 1191.5l5 -5" stroke="#e02020" stroke-width="1.2"/>
<rect x="1761.5" y="1186.5" width="13.5" height="13.5" rx="2" fill="#e6ecf2" stroke="#555f6a" stroke-width="1"/><path d="M1764 1193l3.5 4l7.5 -11" stroke="#1a2a3a" stroke-width="2.2" fill="none"/>
<rect x="1905.5" y="1183.5" width="19" height="19" fill="#f4f4f4" stroke="#888" stroke-width="0.8"/><circle cx="1915" cy="1193" r="6" fill="#ccc" stroke="#777" stroke-width="1"/><path d="M1915 1186v14M1908 1193h14" stroke="#777" stroke-width="1"/>
<rect x="1931.5" y="1183.5" width="19" height="19" fill="#f4f4f4" stroke="#888" stroke-width="0.8"/><path d="M1941 1186l7 13h-14z" fill="#f2ea80" stroke="#333" stroke-width="1"/><path d="M1941 1190v5M1941 1196.5v1.5" stroke="#111" stroke-width="1.4"/>
<path d="M1966 1206l9 -9M1970 1206l5 -5" stroke="#999" stroke-width="0.8"/>
</svg>
</body></html>
